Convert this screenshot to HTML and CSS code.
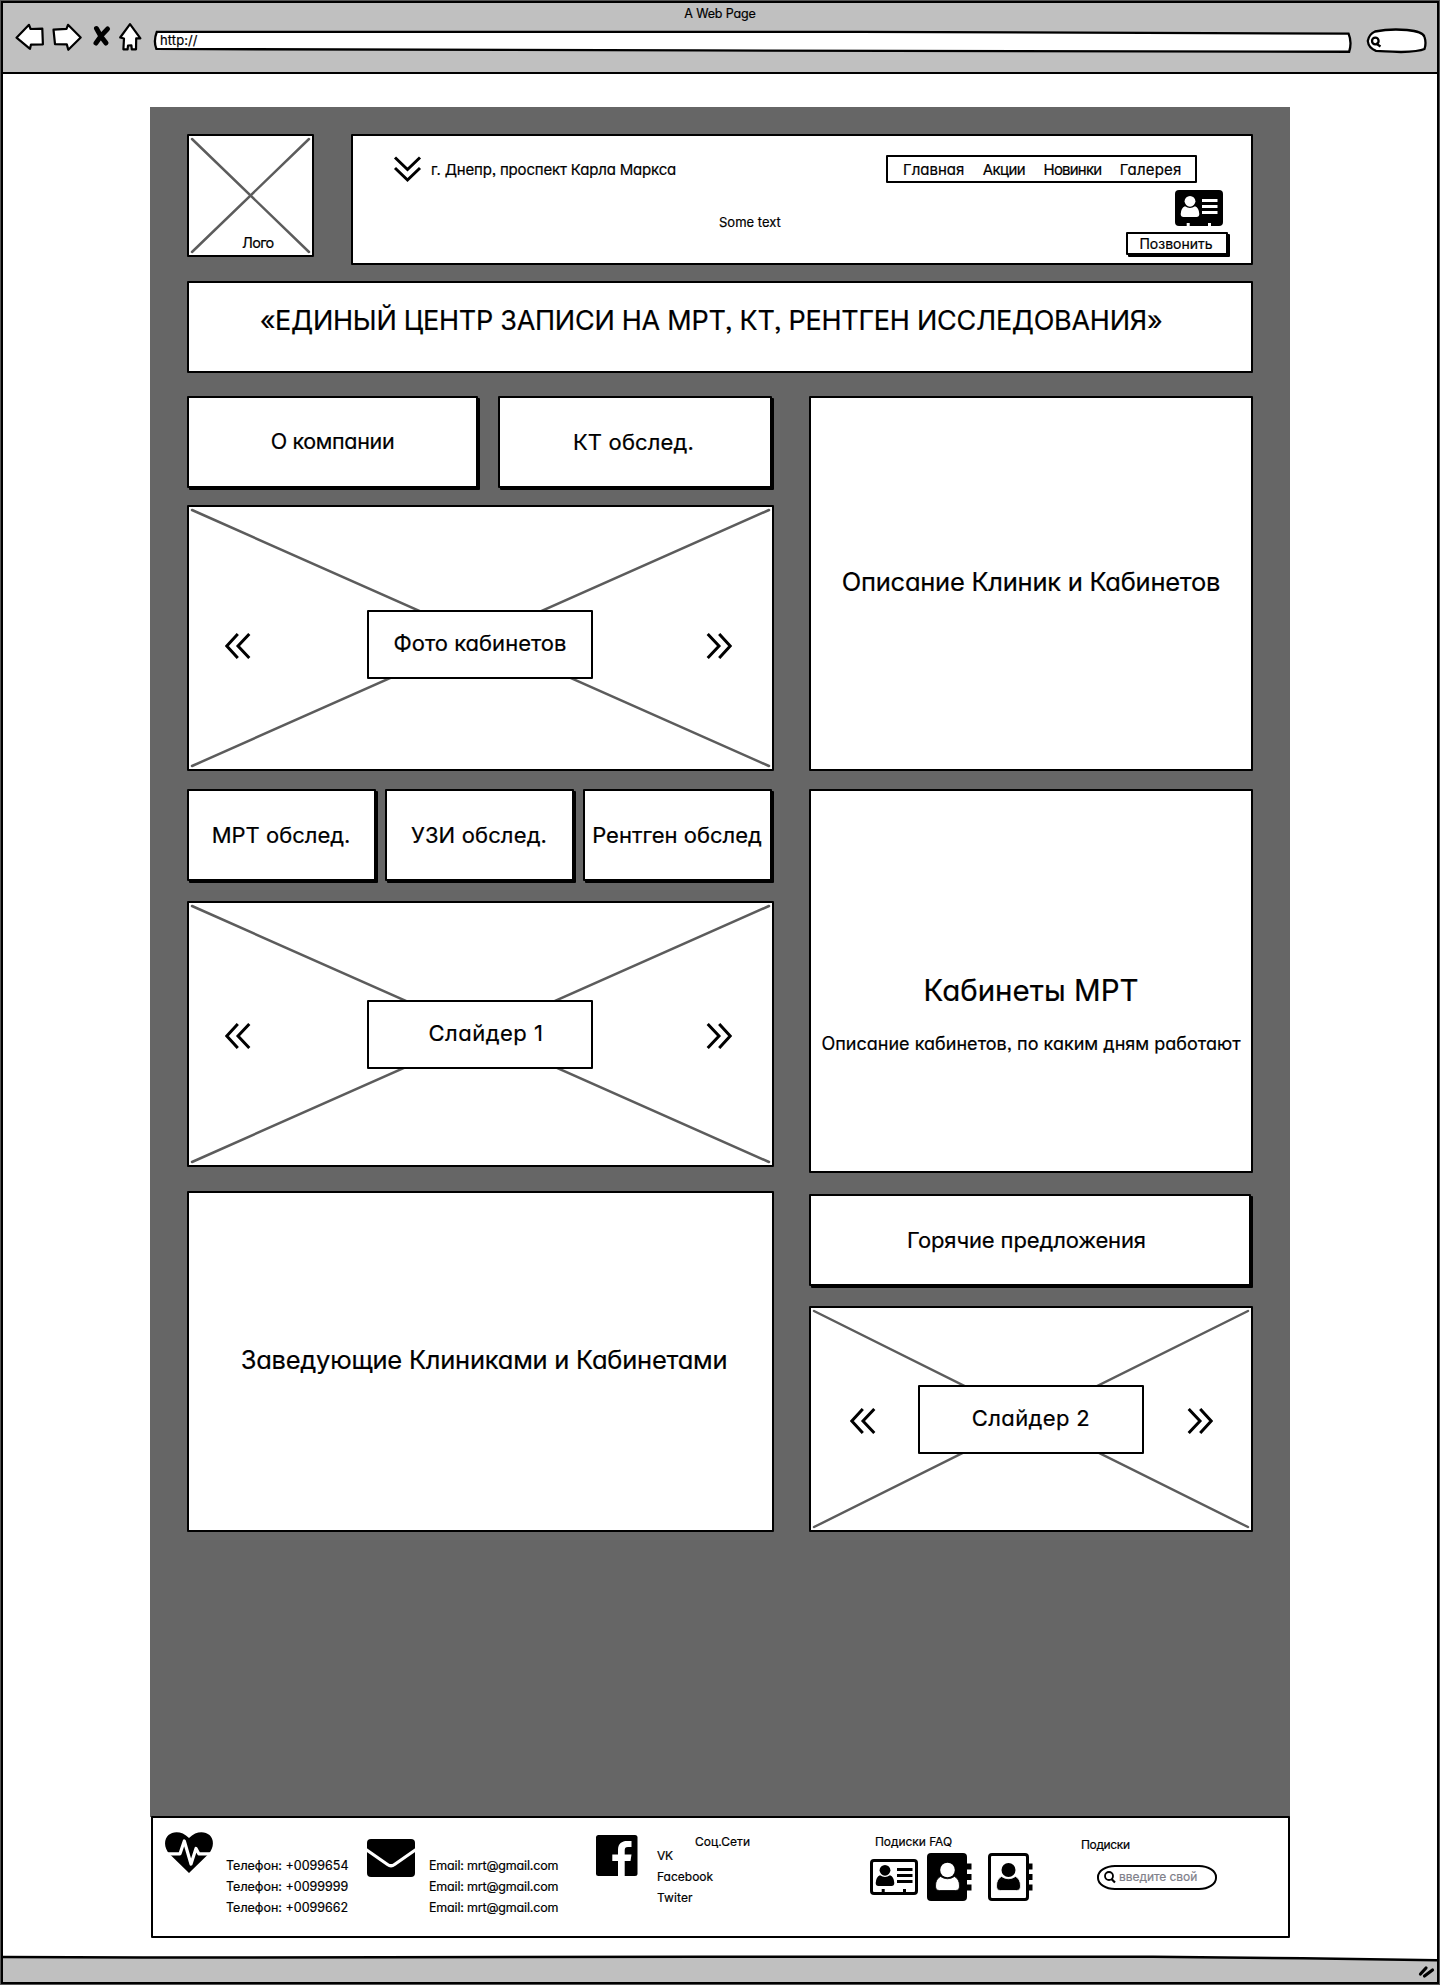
FILE: index.html
```html
<!DOCTYPE html>
<html lang="ru">
<head>
<meta charset="utf-8">
<title>A Web Page</title>
<link rel="stylesheet" href="styles.css">
</head>
<body>
<svg class="defs" width="0" height="0">
  <symbol id="prev" viewBox="0 0 26 26"><path d="M12.8 1 L1.8 13 L12.8 25 M24.3 1 L13 13 L24.3 25" fill="none" stroke="#000" stroke-width="3"/></symbol>
  <symbol id="next" viewBox="0 0 26 26"><path d="M1.7 1 L13 13 L1.7 25 M13.2 1 L24.2 13 L13.2 25" fill="none" stroke="#000" stroke-width="3"/></symbol>
</svg>
<div class="window">
  <header class="chrome">
    <div class="title"><span class="t-title">A Web Page</span></div>
    <div class="toolbar">
      <svg class="tool back" viewBox="15 22 30 30"><path d="M16.5 37.7 L29 24.8 L30.6 29 L42.3 28.6 L42.9 44.3 L31 44.6 L30 48.8 Z"/></svg>
      <svg class="tool fwd" viewBox="52 22 30 30"><path d="M53.5 29.6 L66.5 28.8 L68 24.8 L80.7 37.5 L68.3 49.8 L66.8 44.4 L55 44.2 Z"/></svg>
      <svg class="tool stop" viewBox="92 22 20 30"><path class="x" d="M96.5 28.5 Q100.5 37 106 43 M107.5 29 Q101 35 96 43"/></svg>
      <svg class="tool home" viewBox="117 22 26 30"><path d="M130 24.2 L120.2 37.5 L124 38.5 L123.4 49.3 L127.6 49.4 L128 45.5 L131.4 45.3 L131.8 49.4 L136 49.3 L136.2 38.4 L140.4 38.3 Z"/></svg>
      <div class="url">
        <svg viewBox="153 29 1202 26"><path d="M157 31.8 L860 31.9 L1350 33.6 Q1353.6 42 1350.6 51.8 L700 50.5 L156.4 49 Q153.2 41 156.8 31.8 Z"/></svg>
        <span class="t-url">http://</span>
      </div>
      <svg class="find" viewBox="1366 27 64 28"><path d="M1376 31.5 Q1391 28.5 1408 30 Q1424 31.5 1425.5 37 Q1427.5 43 1425.5 49 Q1420 51.5 1402 52 Q1384 51 1377 50.8 Q1369.5 48 1368.8 41 Q1370 34 1376 31.5 Z"/><circle cx="1376.3" cy="41" r="3.3"/><path d="M1377 43.5 L1381.5 46.5"/></svg>
    </div>
  </header>

  <main class="board">
    <div class="top">
      <div class="logo"><svg class="cross"><line x1="0" y1="0" x2="100%" y2="100%"/><line x1="100%" y1="0" x2="0" y2="100%"/></svg><span class="t-logo">Лого</span></div>
      <div class="head">
        <div class="address">
          <svg width="27" height="26" viewBox="0 0 27 26"><path d="M1 1.5 L13.5 13.5 L26 1.5 M1 12 L13.5 24 L26 12" fill="none" stroke="#000" stroke-width="3"/></svg>
          <span class="t-addr">г. Днепр, проспект Карла Маркса</span>
        </div>
        <div class="note"><span class="t-note">Some text</span></div>
        <div class="side">
          <nav class="menu">
            <a class="t-m1">Главная</a><a class="t-m2">Акции</a><a class="t-m3">Новинки</a><a class="t-m4">Галерея</a>
          </nav>
          <svg class="card" width="48" height="36" viewBox="0 0 48 36"><rect width="48" height="36" rx="4"/><g fill="#fff"><circle cx="15" cy="11.3" r="5.4"/><path d="M10 16.3 Q15 19.5 20 16.3 Q24 18 24.3 24 Q24.3 27 21.5 27 H8.5 Q5.7 27 5.7 24 Q6 18 10 16.3Z"/><path d="M27 9h15.500v3H27zM27 15h15.500v3H27zM27 21h15.500v3H27zM11.700 33h3v3h-3zM33 33h3v3h-3z"/></g></svg>
          <a class="call"><span class="t-call">Позвонить</span></a>
        </div>
      </div>
    </div>

    <div class="banner"><span class="t-banner">«ЕДИНЫЙ ЦЕНТР ЗАПИСИ НА МРТ, КТ, РЕНТГЕН ИССЛЕДОВАНИЯ»</span></div>

    <div class="columns">
      <div class="left">
        <div class="row two">
          <a class="btn"><span class="t-about">О компании</span></a>
          <a class="btn"><span class="t-kt">КТ обслед.</span></a>
        </div>
        <div class="slider photo">
          <svg class="cross"><line x1="0" y1="0" x2="100%" y2="100%"/><line x1="100%" y1="0" x2="0" y2="100%"/></svg>
          <svg class="arrow"><use href="#prev"/></svg>
          <div class="tag"><span class="t-photo">Фото кабинетов</span></div>
          <svg class="arrow"><use href="#next"/></svg>
        </div>
        <div class="row three">
          <a class="btn"><span class="t-mrt">МРТ обслед.</span></a>
          <a class="btn"><span class="t-uzi">УЗИ обслед.</span></a>
          <a class="btn"><span class="t-xray">Рентген обслед</span></a>
        </div>
        <div class="slider first">
          <svg class="cross"><line x1="0" y1="0" x2="100%" y2="100%"/><line x1="100%" y1="0" x2="0" y2="100%"/></svg>
          <svg class="arrow"><use href="#prev"/></svg>
          <div class="tag"><span class="t-s1">Слайдер 1</span></div>
          <svg class="arrow"><use href="#next"/></svg>
        </div>
        <div class="panel heads"><span class="t-heads">Заведующие Клиниками и Кабинетами</span></div>
      </div>
      <div class="right">
        <div class="panel about"><span class="t-desc">Описание Клиник и Кабинетов</span></div>
        <div class="panel rooms">
          <span class="t-rooms">Кабинеты МРТ</span>
          <span class="t-days">Описание кабинетов, по каким дням работают</span>
        </div>
        <a class="btn hot"><span class="t-hot">Горячие предложения</span></a>
        <div class="slider second">
          <svg class="cross"><line x1="0" y1="0" x2="100%" y2="100%"/><line x1="100%" y1="0" x2="0" y2="100%"/></svg>
          <svg class="arrow"><use href="#prev"/></svg>
          <div class="tag"><span class="t-s2">Слайдер 2</span></div>
          <svg class="arrow"><use href="#next"/></svg>
        </div>
      </div>
    </div>
  </main>

  <footer class="footer">
    <svg class="heart" width="48" height="41" viewBox="0 0 48 41"><path d="M24 41 L4.5 22 C-1.5 15.5 -1 7 3.5 3 C8 -1 17 -1.5 24 6 C31 -1.5 40 -1 44.5 3 C49 7 49.5 15.5 43.5 22 Z"/><path d="M0 21.8 H15 L19.3 9 L26 32 L31 16.5 L33.8 21.8 H48" fill="none" stroke="#fff" stroke-width="3.2" stroke-linejoin="round"/></svg>
    <ul class="list phones"><li>Телефон: +0099654</li><li>Телефон: +0099999</li><li>Телефон: +0099662</li></ul>
    <svg class="mail" width="48" height="38" viewBox="0 0 48 38"><rect width="48" height="38" rx="4"/><path d="M-1 10.500 L20.500 25.500 Q24 28 27.500 25.500 L49 10.500" fill="none" stroke="#fff" stroke-width="3.200"/></svg>
    <ul class="list mails"><li>Email: mrt@gmail.com</li><li>Email: mrt@gmail.com</li><li>Email: mrt@gmail.com</li></ul>
    <svg class="fb" width="42" height="41" viewBox="0 0 42 41"><rect width="41.5" height="41" rx="2.5"/><path fill="#fff" d="M22 41 V26 H16.3 V19.5 H22 V15 C22 8.5 26 6 31 6 H35.5 V12 H32 C29.5 12 28.7 13 28.7 15.5 V19.5 H35.5 L34.5 26 H28.7 V41Z"/></svg>
    <div class="social">
      <h3 class="t-soc">Соц.Сети</h3>
      <ul class="list"><li class="t-vk">VK</li><li>Facebook</li><li class="t-tw">Twiter</li></ul>
    </div>
    <div class="faq">
      <h3 class="t-faq">Подиски FAQ</h3>
      <div class="books">
        <svg class="idcard" width="48" height="36" viewBox="0 0 48 36"><rect x="1.5" y="1.5" width="45" height="33" rx="2.5" fill="#fff" stroke="#000" stroke-width="3"/><circle cx="15" cy="11.3" r="5.4"/><path d="M10 16.3 Q15 19.5 20 16.3 Q24 18 24.3 24 Q24.3 27 21.5 27 H8.5 Q5.7 27 5.7 24 Q6 18 10 16.3Z"/><path d="M27 9h15.500v3H27zM27 15h15.500v3H27zM27 21h15.500v3H27zM11.700 30h3v4h-3zM33 30h3v4h-3z"/></svg>
        <svg class="book" width="45" height="48" viewBox="0 0 45 48"><rect width="40" height="48" rx="4"/><path d="M39 10.500h5.500v6H39zM39 21h5.500v6H39zM39 31.500h5.500v6H39z"/><g fill="#fff"><circle cx="20.5" cy="17" r="7.3"/><path stroke="#000" stroke-width=".8" d="M13.500 23.500 Q20.500 28 27.500 23.500 Q32.500 26 32.500 33 Q32.500 37.500 28.500 37.500 H12.500 Q8.500 37.500 8.500 33 Q8.500 26 13.500 23.500Z"/></g></svg>
        <svg class="book" width="45" height="48" viewBox="0 0 45 48"><rect x="1.5" y="1.5" width="38" height="45" rx="2.5" fill="#fff" stroke="#000" stroke-width="3"/><path d="M39 10.500h5.500v6H39zM39 21h5.500v6H39zM39 31.500h5.500v6H39z"/><circle cx="20.5" cy="17" r="7"/><path stroke="#fff" stroke-width=".8" d="M13.500 23.500 Q20.500 28 27.500 23.500 Q32.500 26 32.500 33 Q32.500 37.500 28.500 37.500 H12.500 Q8.500 37.500 8.500 33 Q8.500 26 13.500 23.500Z"/></svg>
      </div>
    </div>
    <div class="subs">
      <h3 class="t-sub">Подиски</h3>
      <div class="pill"><svg width="12" height="12" viewBox="0 0 12 12"><circle cx="5" cy="5" r="4" fill="none" stroke="#000" stroke-width="1.8"/><path d="M7.500 8 L11 11.500" stroke="#000" stroke-width="2.200"/></svg><span class="t-in">введите свой</span></div>
    </div>
  </footer>

  <div class="status">
    <svg viewBox="0 0 1434 27"><path class="bar" d="M0 2.200 H1160 L1300 3.200 L1434 5.200 V27 H0Z"/><path class="edge" d="M0 2 L140 2.600 L700 1.800 L1150 1.800 L1300 3.200 L1434 5.200"/><path class="grip" d="M1417.500 19 L1423 13 M1421.500 21 L1429.500 15"/></svg>
  </div>
</div>
</body>
</html>
```
FILE: styles.css
```css
* { box-sizing: border-box; margin: 0; padding: 0; }
body {
  width: 1440px; height: 1985px; overflow: hidden; background: #fff; color: #000;
  font-family: Inter, "Noto Sans", sans-serif; font-size: 13px; line-height: 1;
  font-feature-settings: "cv11" 1, "ss03" 1;
  -webkit-text-stroke: .2px currentColor;
}
svg { display: block; flex: none; overflow: visible; }
.defs { position: absolute; }
ul { list-style: none; }
h3 { font-weight: 400; font-size: 12px; }
span, a, li, h3 { white-space: nowrap; }

.window {
  display: flex; flex-direction: column; margin: 1px; width: 1438px; height: 1983px;
  border: 2px solid #000; box-shadow: 0 0 0 1px #555;
}

/* browser bar */
.chrome { height: 71px; background: #c0c0c0; border-bottom: 2px solid #000; }
.title { height: 20px; padding-top: 4px; text-align: center; }
.toolbar { display: flex; padding-left: 12px; align-items: flex-start; }
.tool { height: 30px; margin-top: -1px; fill: #fff; stroke: #000; stroke-width: 2.2; stroke-linejoin: round; }
.back { width: 30px; }
.fwd { width: 30px; margin-left: 7px; }
.stop { width: 20px; margin-left: 10px; }
.stop .x { fill: none; stroke-width: 5; stroke-linecap: round; }
.home { width: 26px; margin-left: 5px; }
.url { position: relative; width: 1201px; height: 26px; margin: 6px 0 0 10px; padding: 5px 0 0 7px; }
.url svg { position: absolute; inset: 0; fill: #fff; stroke: #000; stroke-width: 2.3; }
.url span { position: relative; }
.find { width: 64px; height: 28px; margin: 4px 0 0 11px; fill: #fff; stroke: #000; stroke-width: 2.3; }

/* page */
.board { width: 1140px; height: 1710px; margin: 33px 0 0 147px; padding: 27px 37px 0; background: #666; flex: none; }
.top { display: flex; justify-content: space-between; height: 131px; }
.logo, .head, .banner, .panel, .btn, .slider, .tag, .menu, .call, .footer {
  background: #fff; border: 2px solid #000; border-radius: 1px;
}
.logo { position: relative; width: 127px; height: 123px; }
.cross { position: absolute; inset: 3px; width: calc(100% - 6px); height: calc(100% - 6px); stroke: #5c5c5c; stroke-width: 2.5; stroke-linecap: round; }
.logo span { position: absolute; left: 53px; top: 100px; font-size: 14.5px; }
.head { display: grid; grid-template-columns: 366px 1fr 365px; width: 902px; }
.address { display: flex; align-items: center; gap: 10px; height: 26px; margin: 20px 0 0 41px; font-size: 15px; }
.note { padding-top: 80px; }
.side { display: flex; flex-direction: column; }
.menu { display: flex; align-items: center; width: 311px; height: 28px; margin-top: 19px; padding-left: 15px; gap: 18.5px; font-size: 15px; }
.card { margin: 7px 0 0 289px; }
.call { display: flex; align-items: center; justify-content: center; width: 102px; height: 23px; margin: 6px 0 0 240px; padding-right: 2px; font-size: 14px; box-shadow: 2px 2px 0 #000; }
.banner { display: flex; align-items: center; justify-content: center; height: 92px; margin-top: 16px; padding: 0 18px 13px 0; font-size: 27px; }

.columns { display: flex; gap: 35px; margin-top: 23px; }
.left { width: 587px; }
.right { width: 444px; }
.row { display: flex; margin-bottom: 17px; }
.btn { display: flex; align-items: center; justify-content: center; height: 92px; font-size: 22px; box-shadow: 2px 2px 0 #000; }
.two { gap: 20px; }
.two .btn { width: 291px; }
.two .btn + .btn { width: 274px; padding-right: 3px; }
.three { gap: 9px; margin: 18px 0 20px; }
.three .btn { width: 189px; padding-right: 1px; }
.slider { position: relative; display: flex; align-items: center; height: 266px; }
.arrow { position: relative; width: 26px; height: 26px; margin-top: 3px; }
.tag { position: relative; display: flex; align-items: center; justify-content: center; width: 226px; height: 69px; padding-bottom: 2px; font-size: 22px; }
.left .slider { padding-left: 36px; }
.left .tag { margin: 0 113px 0 116px; }
.photo { padding-top: 12px; }
.first .tag { padding-left: 12px; }
.panel { display: flex; align-items: center; justify-content: center; padding-bottom: 3px; font-size: 25.5px; }
.heads { height: 341px; margin-top: 24px; padding-left: 7px; }
.about { height: 375px; }
.rooms { flex-direction: column; justify-content: flex-start; height: 384px; margin-top: 18px; padding-top: 184px; }
.hot { width: 442px; margin: 21px 0 20px; padding-right: 7px; }
.second { height: 226px; padding-left: 39px; }
.second .tag { margin: 0 43px 0 42px; }

/* footer */
.footer { display: flex; align-items: flex-start; flex: none; width: 1139px; height: 122px; margin: -1px 0 0 148px; }
.list { line-height: 21px; }
.heart { margin: 14px 0 0 12px; }
.phones { width: 141px; margin: 37px 0 0 13px; font-size: 12.5px; }
.mail { margin-top: 21px; }
.mails { width: 167px; margin: 37px 0 0 14px; font-size: 12.5px; letter-spacing: -.18px; }
.fb { margin-top: 17px; }
.social { width: 213px; margin: 19px 0 0 19px; font-size: 12px; }
.social h3 { margin-left: 38px; line-height: 9px; }
.social .list { margin-top: -1px; }
.faq { width: 212px; margin-top: 19px; }
.faq h3 { margin-left: 5px; line-height: 9px; }
.books { display: flex; margin-top: 7px; }
.idcard { margin-top: 6px; }
.books .book { margin-left: 9px; }
.books .book + .book { margin-left: 16px; }
.subs { margin-top: 20px; }
.subs h3 { margin-left: -1px; line-height: 13px; }
.pill { display: flex; align-items: center; width: 120px; height: 25px; margin: 14px 0 0 15px; padding: 0 0 1px 5px; gap: 3px; border: 2px solid #000; border-radius: 18px / 12px; color: #80808a; font-size: 12px; }

.status { height: 27px; margin-top: 17px; }
.status svg { width: 1434px; height: 27px; }
.bar { fill: #c0c0c0; }
.edge { fill: none; stroke: #000; stroke-width: 2.5; }
.grip { stroke: #000; stroke-width: 3.2; stroke-linecap: round; }

/* per-label type settings */
.t-title { font-size: 12.5px; letter-spacing: -.15px; }
.t-url { letter-spacing: .1px; }
.t-logo { letter-spacing: -.7px; }
.t-addr { letter-spacing: -.17px; }
.t-m2 { letter-spacing: -.6px; }
.t-m3 { letter-spacing: -.8px; }
.t-m4 { letter-spacing: .2px; }
.t-banner { letter-spacing: -.26px; }
.t-about { font-size: 21.5px; letter-spacing: -.35px; }
.t-kt { letter-spacing: .16px; }
.t-uzi { letter-spacing: .14px; }
.t-s1 { letter-spacing: .5px; }
.t-s2 { letter-spacing: .38px; }
.t-heads { letter-spacing: -.24px; }
.t-desc { letter-spacing: -.25px; }
.t-rooms { font-size: 29.5px; line-height: 30px; letter-spacing: 0; }
.t-days { margin-top: 30px; font-size: 18px; line-height: 18px; letter-spacing: .02px; }
.t-hot { letter-spacing: -.13px; }
.t-soc { letter-spacing: .05px; }
.t-vk { letter-spacing: -.3px; }
.t-tw { letter-spacing: .1px; }
.t-faq { letter-spacing: -.05px; }
.t-sub { letter-spacing: -.35px; }
.t-in { letter-spacing: -.05px; }
```
